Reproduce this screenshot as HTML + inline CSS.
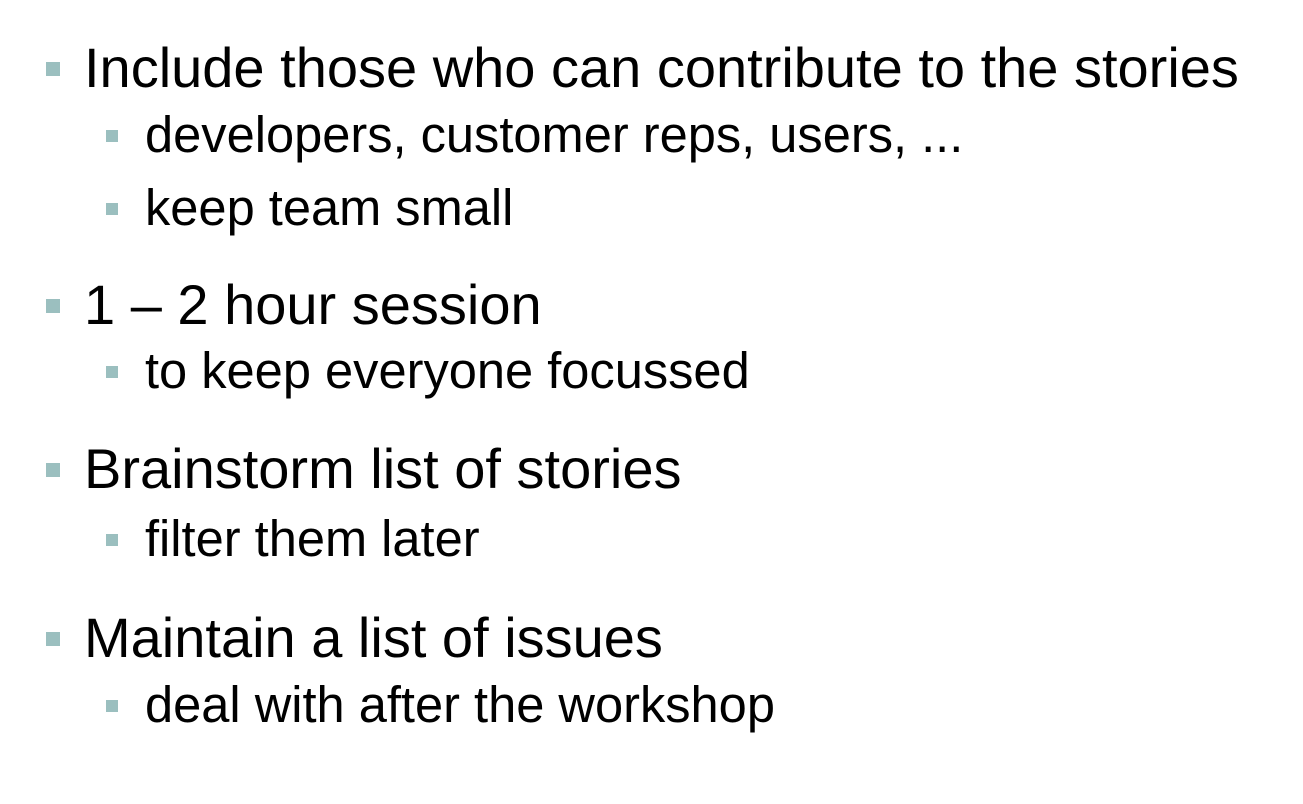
<!DOCTYPE html>
<html><head><meta charset="utf-8"><style>
html,body{margin:0;padding:0;background:#fff;width:1303px;height:804px;overflow:hidden;position:relative}
.t{position:absolute;font-family:"Liberation Sans",Arial,sans-serif;color:#000;line-height:1;white-space:nowrap}
.l1{font-size:56px;left:84px}
.l2{font-size:50.6px;left:145px}
.b{position:absolute;background:#9bbfbf}
.b1{width:14px;height:14px;left:46px}
.b2{width:12px;height:12px;left:106px}
</style></head><body>
<div class="b b1" style="top:62px"></div>
<div class="t l1" style="top:40px">Include those who can contribute to the stories</div>
<div class="b b2" style="top:130px"></div>
<div class="t l2" style="top:110px">developers, customer reps, users, ...</div>
<div class="b b2" style="top:203px"></div>
<div class="t l2" style="top:183px">keep team small</div>

<div class="b b1" style="top:299px"></div>
<div class="t l1" style="top:277px">1 – 2 hour session</div>
<div class="b b2" style="top:366px"></div>
<div class="t l2" style="top:346px">to keep everyone focussed</div>

<div class="b b1" style="top:463px"></div>
<div class="t l1" style="top:441px">Brainstorm list of stories</div>
<div class="b b2" style="top:534px"></div>
<div class="t l2" style="top:514px">filter them later</div>

<div class="b b1" style="top:632px"></div>
<div class="t l1" style="top:610px">Maintain a list of issues</div>
<div class="b b2" style="top:700px"></div>
<div class="t l2" style="top:680px">deal with after the workshop</div>
</body></html>
